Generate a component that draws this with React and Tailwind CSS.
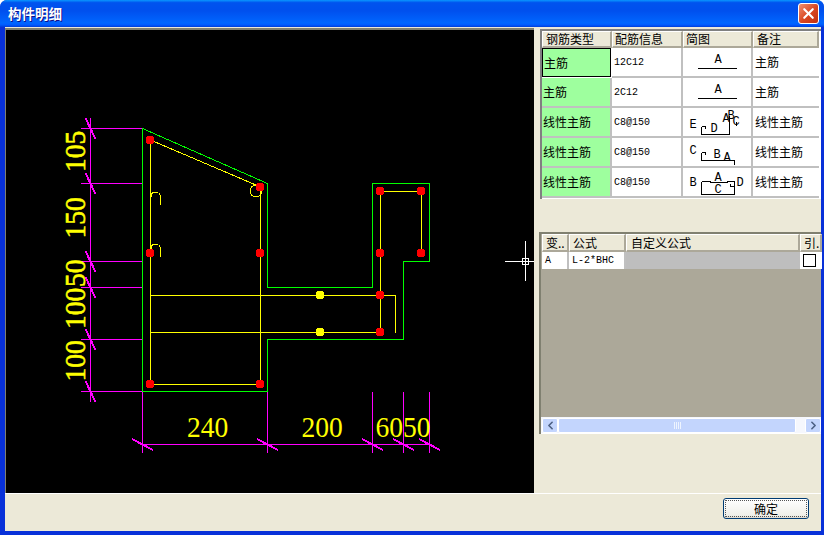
import React from "react";
import { ChevronLeft, ChevronRight, X } from "lucide-react";

const cjk = '"Noto Sans CJK SC", sans-serif';
const mono = '"Liberation Mono", "Noto Sans CJK SC", monospace';

const Y = "#ffff00";
const G = "#00ff00";
const M = "#ff00ff";
const R = "#ff0000";

function Tick({ x, y, h }) {
  return h ? (
    <line x1={x - 10.5} y1={y - 5.5} x2={x + 10.5} y2={y + 5.5} stroke={M} strokeWidth="2" shapeRendering="crispEdges" />
  ) : (
    <line x1={x - 5} y1={y - 10.5} x2={x + 5} y2={y + 10.5} stroke={M} strokeWidth="2" shapeRendering="crispEdges" />
  );
}

function Dim({ x, y, t, v }) {
  return (
    <text
      transform={`translate(${x},${y}) ${v ? "rotate(-90) " : ""}scale(1,1.08)`}
      fill={Y}
      stroke={v ? Y : "none"}
      strokeWidth={v ? 0.5 : 0}
      fontSize="27.5"
      fontFamily='"Liberation Serif", serif'
    >
      {t}
    </text>
  );
}

function Cad() {
  const reds = [[150, 140], [260, 187], [150, 253], [260, 253], [150, 384], [260, 384], [380, 191], [421, 191], [380, 253], [421, 253], [380, 295], [380, 332]];
  const hY = [128.5, 183.5, 261.5, 287.5, 339.5, 391.5];
  const vX = [142.5, 267.5, 372.5, 403.5, 429.5];
  return (
    <svg width="528" height="463" viewBox="6 30 528 463" className="block">
      <g shapeRendering="crispEdges" strokeWidth="1" fill="none">
        {hY.map((y) => <line key={y} x1="81" y1={y} x2="142" y2={y} stroke={M} />)}
        <line x1="90.5" y1="118" x2="90.5" y2="402" stroke={M} />
        <line x1="142.5" y1="444.5" x2="432" y2="444.5" stroke={M} />
        {vX.map((x) => <line key={x} x1={x} y1="392" x2={x} y2="453" stroke={M} />)}
      </g>
      {hY.map((y) => <Tick key={y} x={90.5} y={y} />)}
      {vX.map((x) => <Tick key={x} x={x} y={444.5} h />)}
      <path d="M142.5 391.5V128.5L267.5 183.5V287.5H372.5V183.5H429.5V261.5H403.5V339.5H267.5V391.5Z" fill="none" stroke={G} strokeWidth="1" shapeRendering="crispEdges" />
      <g fill="none" stroke={Y} strokeWidth="1" shapeRendering="crispEdges">
        <path d="M150.5 140L260.5 187V384.5H150.5Z" />
        <path d="M150.5 295.5H395.5V333M150.5 332.5H380.5V191.5H421.5V253" />
        <path d="M151 197C151 193 153 192 155 192C158 192 160.5 194 160.5 197V205" />
        <path d="M151 249C151 245 153 244 155 244C158 244 160.5 246 160.5 249V257" />
        <circle cx="256" cy="191" r="6" />
      </g>
      <g shapeRendering="crispEdges">
        {reds.map(([x, y]) => <circle key={x + "-" + y} cx={x} cy={y} r="4.5" fill={R} />)}
        {[[320, 295], [320, 332]].map(([x, y]) => <circle key={y} cx={x} cy={y} r="4.5" fill={Y} />)}
      </g>
      <Dim x={187} y={436.5} t="240" />
      <Dim x={301.5} y={436.5} t="200" />
      <Dim x={375.5} y={436.5} t="6050" />
      <Dim x={85} y={172} t="105" v />
      <Dim x={85} y={238.5} t="150" v />
      <Dim x={85} y={287} t="50" v />
      <Dim x={85} y={329} t="100" v />
      <Dim x={85} y={381.5} t="100" v />
      <g stroke="#fff" strokeWidth="1" fill="none" shapeRendering="crispEdges">
        <line x1="505" y1="261.5" x2="534" y2="261.5" />
        <line x1="525.5" y1="241" x2="525.5" y2="281" />
        <rect x="522.5" y="258.5" width="6" height="6" />
      </g>
    </svg>
  );
}

function Lbl({ x, y, t }) {
  return (
    <text x={x} y={y} textAnchor="middle" fontSize="12" fontFamily='"Liberation Mono", monospace' fill="#000" stroke="none">{t}</text>
  );
}

const diagrams = [
  <g><Lbl x={35} y={15} t="A" /><path d="M15 20.5H54" /></g>,
  <g><Lbl x={35} y={15} t="A" /><path d="M15 20.5H54" /></g>,
  <g>
    <Lbl x={10} y={20} t="E" /><Lbl x={31} y={24} t="D" /><Lbl x={43} y={14} t="A" /><Lbl x={48} y={11} t="B" /><Lbl x={53} y={17} t="C" />
    <path d="M23 26.5H46.5V8M18.5 18.5V26.5H23M18.5 18.5H22V21M53 14V18" />
  </g>,
  <g>
    <Lbl x={10} y={16} t="C" /><Lbl x={34} y={20} t="B" /><Lbl x={44} y={23} t="A" />
    <path d="M18.5 14.5V22.5H51.5V27M18.5 14.5H22V17" />
  </g>,
  <g>
    <Lbl x={10} y={18} t="B" /><Lbl x={35} y={13} t="A" /><Lbl x={35} y={25} t="C" /><Lbl x={57} y={18} t="D" />
    <path d="M18.5 13.5V26.5H51.5V13.5H44V14.5H27V13.5H18.5M47 18.5H51M47 18.5V16" />
  </g>,
];

const rows = [
  ["主筋", "12C12", "主筋"],
  ["主筋", "2C12", "主筋"],
  ["线性主筋", "C8@150", "线性主筋"],
  ["线性主筋", "C8@150", "线性主筋"],
  ["线性主筋", "C8@150", "线性主筋"],
];

function Hd({ children, className = "" }) {
  return (
    <div className={"flex items-center bg-[#ece9d8] border-r-2 border-b-2 border-[#aca899] border-l border-l-white border-t border-t-white overflow-hidden whitespace-nowrap text-[12px] text-black " + className}>
      {children}
    </div>
  );
}

function RebarTable() {
  return (
    <div className="h-[170px] ml-[6px] mt-[1px] border-t-2 border-l-2 border-[#808080] bg-white" style={{ fontFamily: cjk }}>
      <div className="grid grid-cols-[70px_71px_70px_66px] grid-rows-[17px_repeat(5,30px)]">
        <Hd className="pl-[3px]">钢筋类型</Hd>
        <Hd className="pl-[2px]">配筋信息</Hd>
        <Hd className="pl-[2px]">简图</Hd>
        <Hd className="pl-[3px]">备注</Hd>
        {rows.map((r, i) => (
          <React.Fragment key={i}>
            <div className={i === 0 ? "flex items-center pl-[1px] bg-[#9eff9e] text-[12px] text-black border border-black mr-[1px] mb-[1px]" : "flex items-center pl-[1px] bg-[#9eff9e] text-[12px] text-black border-r-2 border-b-2 border-[#c0c0c0]"}>{r[0]}</div>
            <div className="flex items-center pl-[2px] text-[10px] text-black border-r-2 border-b-2 border-[#c0c0c0]" style={{ fontFamily: mono }}>{r[1]}</div>
            <div className="border-r-2 border-b-2 border-[#c0c0c0]">
              <svg width="68" height="28" viewBox="0 0 68 28" fill="none" stroke="#000" strokeWidth="1" shapeRendering="crispEdges" className="block">
                {diagrams[i]}
              </svg>
            </div>
            <div className="flex items-center pl-[2px] text-[12px] text-black border-b-2 border-[#c0c0c0]">{r[2]}</div>
          </React.Fragment>
        ))}
      </div>
    </div>
  );
}

function ScrollBtn({ children }) {
  return (
    <div className="w-[16px] h-[15px] rounded-[2px] border border-white bg-[#c3d5fd] flex items-center justify-center text-[#4d6185]">
      {children}
    </div>
  );
}

function FormulaTable() {
  return (
    <div className="h-[202px] ml-[5px] mt-[33px] border-t-2 border-l-2 border-[#808070] bg-[#aca899] flex flex-col" style={{ fontFamily: cjk }}>
      <div className="grid grid-cols-[27px_57px_174px_22px] grid-rows-[18px_17px] ml-[1px]">
        <Hd className="pl-[3px]">变..</Hd>
        <Hd className="pl-[3px]">公式</Hd>
        <Hd className="pl-[4px]">自定义公式</Hd>
        <Hd className="pl-[3px]">引.</Hd>
        <div className="flex items-center pl-[3px] bg-white border-r-2 border-[#c0c0c0] text-[10px] text-black" style={{ fontFamily: mono }}>A</div>
        <div className="flex items-center pl-[3px] bg-white border-r-2 border-[#c0c0c0] text-[10px] text-black" style={{ fontFamily: mono }}>L-2*BHC</div>
        <div className="bg-[#bebebe]" />
        <div className="flex items-center pl-[3px] bg-white">
          <div className="w-[13px] h-[13px] border border-black bg-white" />
        </div>
      </div>
      <div className="flex-1" />
      <div className="h-[17px] flex items-center bg-[#f5f7fd] border-b border-white pl-[1px]">
        <ScrollBtn><ChevronLeft size={13} strokeWidth={3} /></ScrollBtn>
        <div className="w-[238px] h-[15px] rounded-[2px] border border-white bg-[#c3d5fd] flex items-center justify-center gap-[1px]">
          {[0, 1, 2, 3].map((k) => <div key={k} className="w-[1px] h-[7px] bg-[#eef4fe]" />)}
        </div>
        <div className="flex-1" />
        <ScrollBtn><ChevronRight size={13} strokeWidth={3} /></ScrollBtn>
      </div>
    </div>
  );
}

export default function App() {
  return (
    <div className="w-[824px] h-[535px] flex flex-col overflow-hidden bg-[#0831d9] rounded-t-[7px]" style={{ fontFamily: cjk }}>
      <div className="h-[27px] shrink-0 flex items-center justify-between pl-[8px] pr-[5px] bg-[linear-gradient(180deg,#0997ff_0%,#0053ee_10%,#0050ee_40%,#0066ff_85%,#005bff_92%,#003dd7_100%)]">
        <span className="text-[13.5px] font-bold text-white leading-none [text-shadow:1px_1px_0_#0f1089]">构件明细</span>
        <div className="w-[21px] h-[21px] rounded-[3px] border border-white bg-[linear-gradient(135deg,#f09070,#d8451f_55%,#c03010)] flex items-center justify-center text-white">
          <X size={17} strokeWidth={3} />
        </div>
      </div>
      <div className="flex-1 min-h-0 ml-[5px] mr-[3px] bg-[#ece9d8] flex flex-col">
        <div className="h-[466px] shrink-0 pt-[1px] flex">
          <div className="w-[529px] h-[465px] border-t-2 border-l border-[#808070] bg-black">
            <Cad />
          </div>
          <div className="flex-1 flex flex-col min-w-0">
            <RebarTable />
            <FormulaTable />
          </div>
        </div>
        <div className="flex-1 border-t border-white flex justify-end pr-[12px] pt-[4px]">
          <div className="w-[86px] h-[21px] rounded-[3px] border border-[#003c74] bg-[linear-gradient(180deg,#ffffff,#f0f0ea_85%,#dcd8cc)] flex items-center justify-center outline-1 outline-dotted -outline-offset-3 outline-[#555] text-[12px] text-black">
            确定
          </div>
        </div>
      </div>
      <div className="h-[4px] shrink-0" />
    </div>
  );
}
